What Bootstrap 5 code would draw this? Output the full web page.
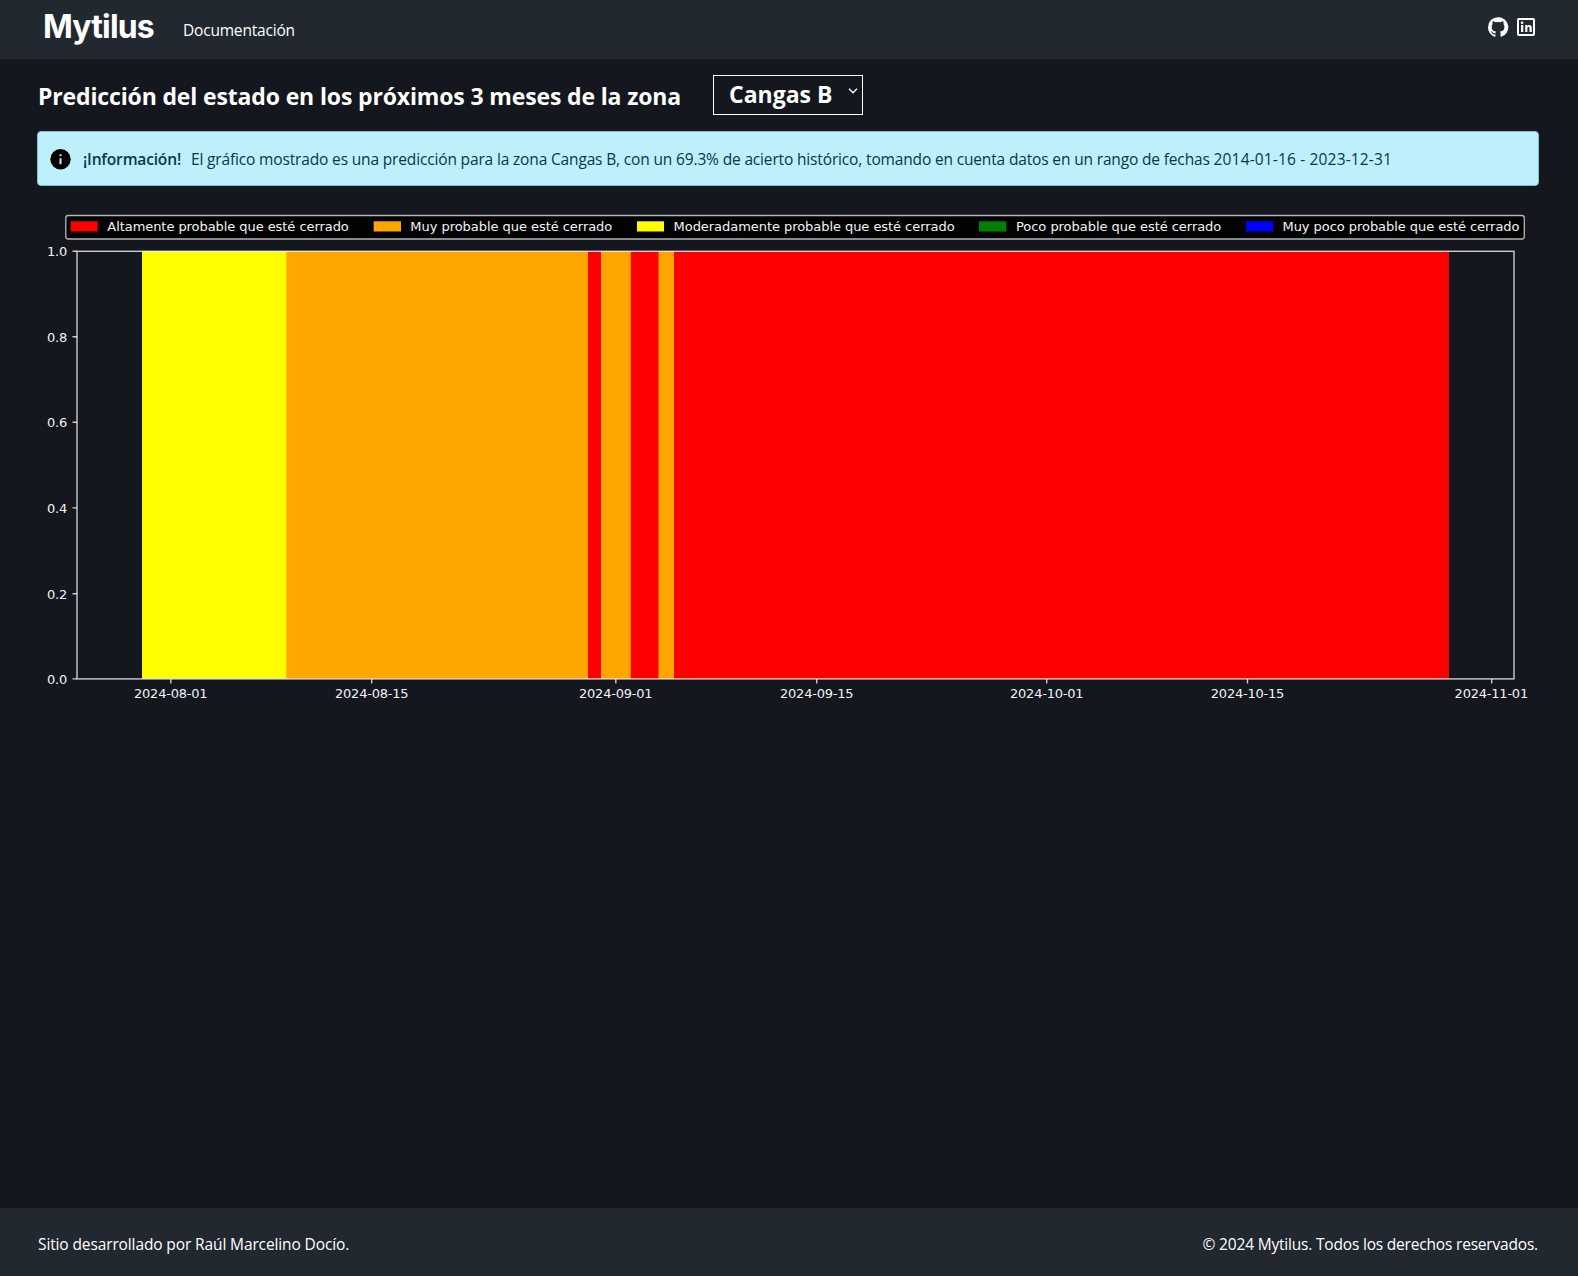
<!DOCTYPE html>
<html lang="es">
<head>
<meta charset="utf-8">
<meta name="viewport" content="width=device-width, initial-scale=1">
<title>Mytilus</title>
<link href="https://cdn.jsdelivr.net/npm/bootstrap@5.3.0/dist/css/bootstrap.min.css" rel="stylesheet">
<style>
body{background:#14171e;color:#fff;font-family:"Open Sans","Noto Sans",sans-serif;font-size:15.5px;line-height:24px;letter-spacing:-.12px}
.site-bar{background:#222830}
.top-bar{height:59px;padding:0 41.5px 0 43px}
.brand-name{font:700 32px/40px Inter,sans-serif;letter-spacing:-.85px;margin:-5px 29px 0 0;padding:0;color:#fff}
.doc-link{color:#fff;padding:1px 0 0;letter-spacing:-.18px}
.social-links{margin-top:-5px;gap:6px}
.page-body{padding:16px 39px 0 37px}
.page-title{font-size:23px;font-weight:700;line-height:36px;letter-spacing:-.145px;margin:3px 0 0 1px;width:675px}
.zone-box{position:relative;width:150px;height:40px}
.zone-select{appearance:none;width:150px;height:40px;border:1px solid #fff;border-radius:0;background:transparent;color:#fff;font-size:23px;font-weight:700;letter-spacing:0;padding:0 0 2px 15px;line-height:36px}
.zone-arrow{position:absolute;right:5px;top:13px;pointer-events:none}
.info-alert{height:55px;margin:16px 0 0;padding:1px 12px 0;background:#bdf0fb;border:1px solid #85bccb;border-radius:4px;color:#06394a}
.info-alert strong{font-size:15.6px;font-weight:600;letter-spacing:-.2px;margin:0 10px 0 12px}
.info-text{letter-spacing:-.154px}
.date-range{letter-spacing:.16px}
.chart{display:block;font:13px "DejaVu Sans",sans-serif;letter-spacing:0;fill:#f2f2f3}
.tick-labels{letter-spacing:-.22px}
.foot-bar{height:68px;padding:4px 40px 0 38px}
.foot-bar .rights{letter-spacing:-.19px}
</style>
</head>
<body class="d-flex flex-column min-vh-100">
<header class="site-bar top-bar navbar flex-nowrap justify-content-start">
  <a class="navbar-brand brand-name" href="#">Mytilus</a>
  <a class="nav-link doc-link" href="#">Documentación</a>
  <div class="social-links d-flex align-items-center ms-auto">
    <a class="d-flex" href="#" aria-label="GitHub"><svg width="22" height="22" viewBox="0 0 24 24" fill="#fff"><path d="M12 1.3A10.9 10.9 0 0 0 1.1 12.2c0 4.8 3.1 8.9 7.4 10.4.6.1.8-.2.8-.5v-2c-3 .6-3.7-1.3-3.7-1.3-.5-1.3-1.2-1.6-1.2-1.6-1-.7.1-.7.1-.7 1.1.1 1.7 1.1 1.7 1.1 1 1.7 2.6 1.2 3.2.9.1-.7.4-1.2.7-1.5-2.4-.3-5-1.2-5-5.4 0-1.2.4-2.2 1.1-2.9-.1-.3-.5-1.4.1-2.9 0 0 .9-.3 3 1.1a10.500 10.500 0 0 1 5.500 0c2.100-1.400 3-1.100 3-1.100.6 1.500.2 2.600.1 2.900.7.7 1.100 1.700 1.100 2.900 0 4.200-2.500 5.100-5 5.400.4.300.8 1 .8 2v3.100c0 .3.2.6.8.5A10.900 10.900 0 0 0 12 1.300Z"/></svg></a>
    <a class="d-flex" href="#" aria-label="LinkedIn"><svg width="22" height="22" viewBox="0 0 22 22"><rect x="3" y="3" width="16" height="16" rx=".8" fill="none" stroke="#fff" stroke-width="2"/><path d="M6 9h2.300v7H6zM10.200 9h2.200v1c1-1.700 4.400-1.500 4.400 1.800V16h-2.300v-3.600c0-2-2.100-1.900-2.100 0V16h-2.200z" fill="#fff"/><circle cx="7.100" cy="6.800" r="1.300" fill="#fff"/></svg></a>
  </div>
</header>

<main class="page-body flex-grow-1">
  <div class="d-flex align-items-start">
    <h1 class="page-title text-nowrap">Predicción del estado en los próximos 3 meses de la zona</h1>
    <div class="zone-box">
      <select class="zone-select" aria-label="Zona"><option selected>Cangas B</option></select>
      <svg class="zone-arrow" width="10" height="6" viewBox="0 0 10 6"><path d="M1 .8 5 4.800 9 .8" fill="none" stroke="#fff" stroke-width="1.300"/></svg>
    </div>
  </div>

  <div class="alert info-alert d-flex align-items-center text-nowrap" role="alert">
    <svg width="21" height="21" viewBox="0 0 21 21"><circle cx="10.500" cy="10.200" r="10.200" fill="#000"/><path d="M9.500 5.200h2v2h-2zM9.500 9.200h2v6h-2z" fill="#bdf0fb"/></svg>
    <strong>¡Información!</strong>
    <span class="info-text">El gráfico mostrado es una predicción para la zona Cangas B, con un 69.3% de acierto histórico, tomando en cuenta datos en un rango de fechas <span class="date-range">2014-01-16 - 2023-12-31</span></span>
  </div>

  <svg class="chart" width="1502" height="534" viewBox="37 186 1502 534">
    <rect x="65.800" y="215.500" width="1458.500" height="23.500" rx="2.500" fill="#030304" stroke="#b4b5b8" stroke-width="1.300"/>
    <g>
      <rect x="70.700" y="221.300" width="27" height="10.200" fill="red"/>
      <rect x="373.700" y="221.300" width="27.300" height="10.200" fill="orange"/>
      <rect x="637" y="221.300" width="27" height="10.200" fill="#ff0"/>
      <rect x="979" y="221.300" width="27.300" height="10.200" fill="green"/>
      <rect x="1246" y="221.300" width="27.300" height="10.200" fill="#00f"/>
    </g>
    <g>
      <text x="107.300" y="231.200" textLength="241.500">Altamente probable que esté cerrado</text>
      <text x="410.300" y="231.200" textLength="202">Muy probable que esté cerrado</text>
      <text x="673.600" y="231.200" textLength="281">Moderadamente probable que esté cerrado</text>
      <text x="1016" y="231.200" textLength="205.300">Poco probable que esté cerrado</text>
      <text x="1282.500" y="231.200" textLength="237">Muy poco probable que esté cerrado</text>
    </g>
    <g>
      <rect x="142" y="251.300" width="146" height="427.400" fill="#ff0"/>
      <rect x="286.300" y="251.300" width="303" height="427.400" fill="orange"/>
      <rect x="588" y="251.300" width="861" height="427.400" fill="red"/>
      <rect x="601" y="251.300" width="29.800" height="427.400" fill="orange"/>
      <rect x="658.500" y="251.300" width="15.500" height="427.400" fill="orange"/>
    </g>
    <g fill="none" stroke="#fff" stroke-opacity=".78" stroke-width="1.400">
      <rect x="77" y="251.300" width="1437" height="427.600"/>
      <path d="M72.500 251.300H77M72.500 336.800H77M72.500 422.300H77M72.500 507.900H77M72.500 593.700H77M72.500 678.900H77M170.800 679v4.500M371.700 679v4.500M615.800 679v4.500M816.700 679v4.500M1046.700 679v4.500M1247.500 679v4.500M1491.700 679v4.500"/>
    </g>
    <g class="tick-labels" text-anchor="end">
      <text x="67" y="256.400">1.0</text><text x="67" y="342">0.8</text><text x="67" y="427.400">0.6</text><text x="67" y="513">0.4</text><text x="67" y="598.700">0.2</text><text x="67" y="684.400">0.0</text>
    </g>
    <g class="tick-labels" text-anchor="middle">
      <text x="170.700" y="698">2024-08-01</text><text x="371.700" y="698">2024-08-15</text><text x="615.700" y="698">2024-09-01</text><text x="816.700" y="698">2024-09-15</text><text x="1046.700" y="698">2024-10-01</text><text x="1247.500" y="698">2024-10-15</text><text x="1491.300" y="698">2024-11-01</text>
    </g>
  </svg>
</main>

<footer class="site-bar foot-bar d-flex align-items-center justify-content-between">
  <span>Sitio desarrollado por Raúl Marcelino Docío.</span>
  <span class="rights">© 2024 Mytilus. Todos los derechos reservados.</span>
</footer>
<script src="https://cdn.jsdelivr.net/npm/bootstrap@5.3.0/dist/js/bootstrap.bundle.min.js"></script>
</body>
</html>
